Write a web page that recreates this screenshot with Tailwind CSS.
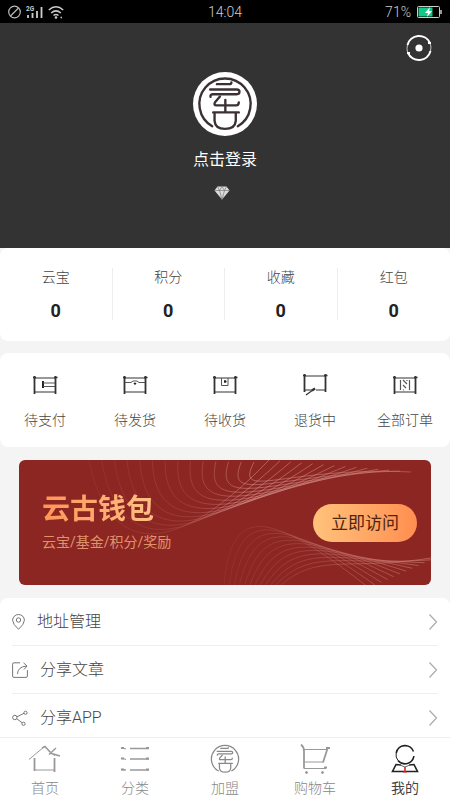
<!DOCTYPE html>
<html lang="zh-CN">
<head>
<meta charset="utf-8">
<meta name="viewport" content="width=device-width, initial-scale=1">
<title>我的</title>
<script src="https://cdn.jsdelivr.net/npm/@tailwindcss/browser@4"></script>
</head>
<body class="flex h-dvh flex-col bg-[#f4f4f4] font-[Roboto,'Noto_Sans_CJK_SC',sans-serif] font-light text-[#444]">

<svg class="hidden" aria-hidden="true">
  <symbol id="seal" viewBox="72 35 190 190">
    <g fill="none" stroke="currentColor" stroke-width="7" stroke-linecap="round" stroke-linejoin="round">
      <path d="M129 196A76 76 0 1 1 205 196"/>
      <path d="M143 71H179Q186 71 186 66"/>
      <path d="M123 87H202Q210 87 210 94Q210 101 202 101H130Q123 102 124 109"/>
      <path d="M152 108L138 124Q132 134 142 134H200Q208 134 208 125"/>
      <path d="M168 118V155M132 155H208M136 155V180Q138 204 167 204Q197 204 199 180V155"/>
    </g>
  </symbol>
  <symbol id="frame" viewBox="0 0 26 20">
    <path d="M2 3H24M2 17H24" stroke="#777" stroke-width="1.3"/>
    <path d="M2.500 1V19M23.500 1V19" stroke="#333" stroke-width="1.800"/>
    <path d="M1 2.500H4M22 2.500H25.500" stroke="#333" stroke-width="1.500"/>
  </symbol>
  <symbol id="chevron" viewBox="0 0 10 18">
    <path d="M1.500 1.500L8.500 9L1.500 16.500" fill="none" stroke="#aaa" stroke-width="1.200"/>
  </symbol>
</svg>

<div class="grid h-[23px] shrink-0 grid-cols-3 items-center bg-black px-2 text-sm leading-5 text-[#ccc]">
  <div class="flex items-center gap-1">
    <svg class="size-3.5" viewBox="0 0 14 14" fill="none" stroke="#bbb" stroke-width="1.200"><circle cx="6.500" cy="7" r="5.800"/><path d="M2.500 11L10.500 3"/></svg>
    <svg class="h-4 w-[18px]" viewBox="0 0 18 16"><text x="0" y="7" font-size="6.500" font-weight="700" font-family="Roboto, sans-serif" fill="#ccc">2G</text><path d="M2 11V14M6.500 9V14M11 7V14M15.500 3V14" stroke="#ccc" stroke-width="1.800"/></svg>
    <svg class="h-3.5 w-4" viewBox="0 0 16 14" fill="none" stroke="#ccc" stroke-width="1.500"><path d="M.8 5Q8-1.500 15.200 5M3.200 8Q8 3.800 12.800 8M5.500 10.500Q8 8.500 10.500 10.500"/><circle cx="8" cy="12.500" r=".6"/><path d="M12.500 12.500H14"/></svg>
  </div>
  <div class="text-center">14:04</div>
  <div class="flex items-center justify-end gap-1.5">
    <span>71%</span>
    <svg class="h-3 w-[25px]" viewBox="0 0 25 12"><rect x=".5" y=".5" width="22" height="11" rx="1" fill="none" stroke="#ccc"/><path d="M24 4V8" stroke="#ccc" stroke-width="1.500"/><rect x="1.500" y="1.500" width="14" height="9" fill="#12c888"/><path d="M13 1L8 7H11L10 11L15 5H12Z" fill="#fff"/></svg>
  </div>
</div>

<main class="min-h-0 flex-1 overflow-y-auto [scrollbar-width:none]">
  <header class="relative flex h-[225px] flex-col items-center bg-[#333] pt-[49px] text-white">
    <button aria-label="设置" class="absolute top-3 right-[18px]">
      <svg class="block size-[26px]" viewBox="0 0 26 26" fill="none" stroke="#fff"><path d="M1.500 10A12 12 0 0 1 24 8" stroke-width="2"/><path d="M2 18A12 12 0 0 0 24.500 16" stroke-width="2"/><path d="M24 8A12 12 0 0 1 24.500 16M1.500 10A12 12 0 0 0 1.500 17" stroke-width="1" opacity=".7"/><path d="M22 8H25M1 18H4" stroke-width="2"/><circle cx="13" cy="13" r="3.600" fill="#fff" stroke="none"/></svg>
    </button>
    <div class="size-16 rounded-full bg-white text-[#3b3034]"><svg class="size-full"><use href="#seal"/></svg></div>
    <a href="#login" class="mt-3 text-base leading-6 font-normal">点击登录</a>
    <svg class="mt-3.5 mr-1.5 h-3.5 w-4" viewBox="0 0 16 14"><path d="M3.500 .5H12.500L15.500 4.500L8 13.500L.5 4.500Z" fill="#ddd"/><path d="M.5 4.500H15.500M3.500 .5L5.500 4.500L8 13.500L10.500 4.500L12.500 .5M5.500 4.500L8 .5L10.500 4.500" fill="none" stroke="#777" stroke-width=".7"/></svg>
  </header>

  <section class="grid grid-cols-4 divide-x divide-[#eee] rounded-lg bg-white pt-5 pb-[21px] text-center text-sm leading-5">
    <div class="h-[52px]"><p class="leading-[18px]">云宝</p><p class="mt-[13px] text-lg leading-6 font-bold text-[#222]">0</p></div>
    <div class="h-[52px]"><p class="leading-[18px]">积分</p><p class="mt-[13px] text-lg leading-6 font-bold text-[#222]">0</p></div>
    <div class="h-[52px]"><p class="leading-[18px]">收藏</p><p class="mt-[13px] text-lg leading-6 font-bold text-[#222]">0</p></div>
    <div class="h-[52px]"><p class="leading-[18px]">红包</p><p class="mt-[13px] text-lg leading-6 font-bold text-[#222]">0</p></div>
  </section>

  <section class="mt-3 grid grid-cols-5 rounded-lg bg-white pt-[22px] pb-[17px] text-sm leading-5">
    <a href="#pay" class="flex flex-col items-center gap-[15px]"><svg class="h-5 w-[26px]" viewBox="0 0 26 20" fill="none" stroke="#555"><use href="#frame"/><path d="M11 6V13" stroke="#222" stroke-width="2"/><path d="M11 8H23M11 11.500H23"/></svg>待支付</a>
    <a href="#ship" class="flex flex-col items-center gap-[15px]"><svg class="h-5 w-[26px]" viewBox="0 0 26 20" fill="none" stroke="#555"><use href="#frame"/><path d="M3 7.500H9L11 6H15L17 7.500H23"/><path d="M12 8L13 9L14 8" stroke="#222" stroke-width="1.500"/></svg>待发货</a>
    <a href="#receive" class="flex flex-col items-center gap-[15px]"><svg class="h-5 w-[26px]" viewBox="0 0 26 20" fill="none" stroke="#555"><use href="#frame"/><path d="M9.500 3V10.500H16V3"/><path d="M12 6.500H14.500M13 5V8" stroke="#222" stroke-width="1.300"/></svg>待收货</a>
    <a href="#return" class="flex flex-col items-center gap-[15px]"><svg class="h-5 w-[26px] overflow-visible" viewBox="0 2 26 20" fill="none" stroke="#333"><path d="M2 3H24M2 17H11M14 17H24" stroke="#777" stroke-width="1.300"/><path d="M2.500 1V19M23.500 1V19" stroke-width="1.800"/><path d="M1 2.500H4M22 2.500H25.500" stroke-width="1.500"/><path d="M4 22L13 15.500" stroke-width="1.200"/><path d="M10 17.500L13 15.500" stroke-width="2.200"/></svg>退货中</a>
    <a href="#orders" class="flex flex-col items-center gap-[15px]"><svg class="h-5 w-[26px]" viewBox="0 0 26 20" fill="none" stroke="#555"><use href="#frame"/><path d="M8.500 5V15M17.500 5V15M11 5L15 9M11 10L14 13M11 15H12M15 5V6" stroke-width="1.200"/></svg>全部订单</a>
  </section>

  <section class="relative mx-[19px] mt-[13px] flex h-[125px] items-center justify-between overflow-hidden rounded-md bg-[#8b2622] pr-3.5 pl-[23px]">
    <svg class="absolute inset-0 size-full" viewBox="0 0 412 125" preserveAspectRatio="none" fill="none" aria-hidden="true">
      <defs>
        <linearGradient id="upper" gradientUnits="userSpaceOnUse" x1="70" y1="0" x2="392" y2="0"><stop offset="0" stop-color="#d08080" stop-opacity=".1"/><stop offset=".3" stop-color="#d08080" stop-opacity=".22"/><stop offset=".5" stop-color="#dc9c98" stop-opacity=".5"/><stop offset="1" stop-color="#d08078" stop-opacity=".5"/></linearGradient>
        <linearGradient id="lower" gradientUnits="userSpaceOnUse" x1="205" y1="0" x2="412" y2="0"><stop offset="0" stop-color="#d08080" stop-opacity=".1"/><stop offset=".35" stop-color="#d08080" stop-opacity=".25"/><stop offset="1" stop-color="#dc9088" stop-opacity=".5"/></linearGradient>
      </defs>
      <g id="waves" stroke-width="1"></g>
    </svg>
    <div class="relative">
      <h2 class="bg-gradient-to-r from-[#ff9458] to-[#ffc78c] bg-clip-text text-[28px] leading-8 font-bold text-transparent">云古钱包</h2>
      <p class="mt-1.5 text-sm leading-5 font-normal text-[#e0936a]">云宝/基金/积分/奖励</p>
    </div>
    <button class="relative h-[38px] rounded-full bg-gradient-to-r from-[#ffc27c] to-[#ff8e50] px-[18px] text-[17px] leading-6 font-normal text-[#4d2410]">立即访问</button>
  </section>

  <nav aria-label="更多" class="mt-[13px] rounded-t-lg bg-white px-3 text-base leading-6">
    <a href="#address" class="flex h-12 items-center border-b border-[#eee]"><svg class="mr-3 h-4 w-[13px]" viewBox="0 0 13 16" fill="none" stroke="#777"><path d="M6.500 15.300Q.6 10 .6 6.200A5.900 5.700 0 0 1 12.400 6.200Q12.400 10 6.500 15.300Z"/><circle cx="6.500" cy="6" r="2.200"/></svg><span class="flex-1">地址管理</span><svg class="h-[18px] w-2.5"><use href="#chevron"/></svg></a>
    <a href="#article" class="flex h-12 items-center border-b border-[#eee]"><svg class="mr-3 size-4" viewBox="0 0 16 16" fill="none" stroke="#777"><path d="M8 .8H2Q.6 .8 .6 2.200V14Q.6 15.400 2 15.400H14Q15.400 15.400 15.400 14V8"/><path d="M5.500 12Q5.500 5 14.500 4M11.500 .8L15 4L12 7.500"/></svg><span class="flex-1">分享文章</span><svg class="h-[18px] w-2.5"><use href="#chevron"/></svg></a>
    <a href="#app" class="flex h-12 items-center"><svg class="mr-3 size-4" viewBox="0 0 16 16" fill="none" stroke="#777"><circle cx="2.800" cy="7.500" r="2.200"/><circle cx="13.500" cy="2.800" r="1.600"/><circle cx="11.500" cy="13.800" r="1.600"/><path d="M5 6.800L12 3.300M4.800 8.800L10.200 12.800"/></svg><span class="flex-1">分享APP</span><svg class="h-[18px] w-2.5"><use href="#chevron"/></svg></a>
  </nav>
</main>

<nav aria-label="主导航" class="grid shrink-0 grid-cols-5 border-t border-[#eee] bg-white pt-1.5 pb-0.5 text-sm leading-5 text-[#888]">
  <a href="#home" class="flex flex-col items-center gap-1"><svg class="h-[30px] w-8" viewBox="0 0 32 30" fill="none" stroke="#999"><path d="M0 15.500L15.500 2.500L26 12"/><path d="M13 4L16 2.500L21 8M27 4L20 10.500M21 9L31 12" stroke-width="1.500"/><path d="M5.500 14V27M25.500 14V28" stroke-width="1.800"/><path d="M5.500 26H25.500"/></svg>首页</a>
  <a href="#category" class="flex flex-col items-center gap-1"><svg class="h-[30px] w-8" viewBox="0 0 32 30" fill="none" stroke="#999" stroke-width="1.300"><path d="M2 3.500L7 5M11 4.500H30M2 14L7 15.500M11 15H30M2 25.500L7 26M11 26H30"/><path d="M2 4H5M27 4H30M2 14.500H5M27 14.500H30M2 25.500H5M27 25.500H30" stroke-width="2"/></svg>分类</a>
  <a href="#join" class="flex flex-col items-center gap-1"><svg class="h-[30px] w-8 text-[#888]" viewBox="0 0 32 30"><use href="#seal" x="-1" y="-2" width="34" height="34"/></svg>加盟</a>
  <a href="#cart" class="flex flex-col items-center gap-1"><svg class="h-[30px] w-8" viewBox="0 0 32 30" fill="none" stroke="#999"><path d="M2 .5Q5 3 5 7V24.500" stroke-width="1.800"/><path d="M5 5.500H29M5 18H24M5 24.500H27"/><path d="M29 3L24 18.500" stroke-width="1.800"/><path d="M27 4H31M25 23.500H28" stroke-width="2"/><circle cx="7.500" cy="28.500" r="1" fill="#999"/><circle cx="23.500" cy="28.500" r="1" fill="#999"/></svg>购物车</a>
  <a href="#me" aria-current="page" class="flex flex-col items-center gap-1 font-normal text-[#444]"><svg class="h-[30px] w-8" viewBox="0 0 32 30" fill="none" stroke="#222"><path d="M7.200 9A9 9 0 0 1 24.500 7.500M24.900 12A9 9 0 0 1 9 16.500" stroke-width="1.600"/><path d="M7.200 9A9 9 0 0 0 9 16.500"/><path d="M12 21L7 20.500L3.500 27.500H28.500L25 20.500L20 21" stroke-width="1.600"/><path d="M11 21L16 23L21 21" stroke="#666"/><path d="M16 23V28" stroke="#e02020" stroke-width="1.600"/><path d="M14 28H18" stroke="#e02020"/></svg>我的</a>
</nav>

<script>
// Draws each wave as a family of curves blended between its first and last curve.
const families = [
  { from: [70, 0, 85, 80, 140, 115, 250, 0], to: [235, 2, 215, 42, 265, 6, 392, 12], count: 14, stroke: 'url(#upper)' },
  { from: [205, 125, 212, 48, 245, 45, 350, 128], to: [262, 125, 300, 92, 330, 112, 418, 97], count: 12, stroke: 'url(#lower)' }
];
const waves = document.getElementById('waves');
for (const { from, to, count, stroke } of families) {
  for (let i = 0; i < count; i++) {
    const p = from.map((v, k) => v + (to[k] - v) * i / (count - 1));
    const path = document.createElementNS('http://www.w3.org/2000/svg', 'path');
    path.setAttribute('d', `M${p[0]} ${p[1]}C${p.slice(2).join(' ')}`);
    path.setAttribute('stroke', stroke);
    waves.append(path);
  }
}
</script>
</body>
</html>
